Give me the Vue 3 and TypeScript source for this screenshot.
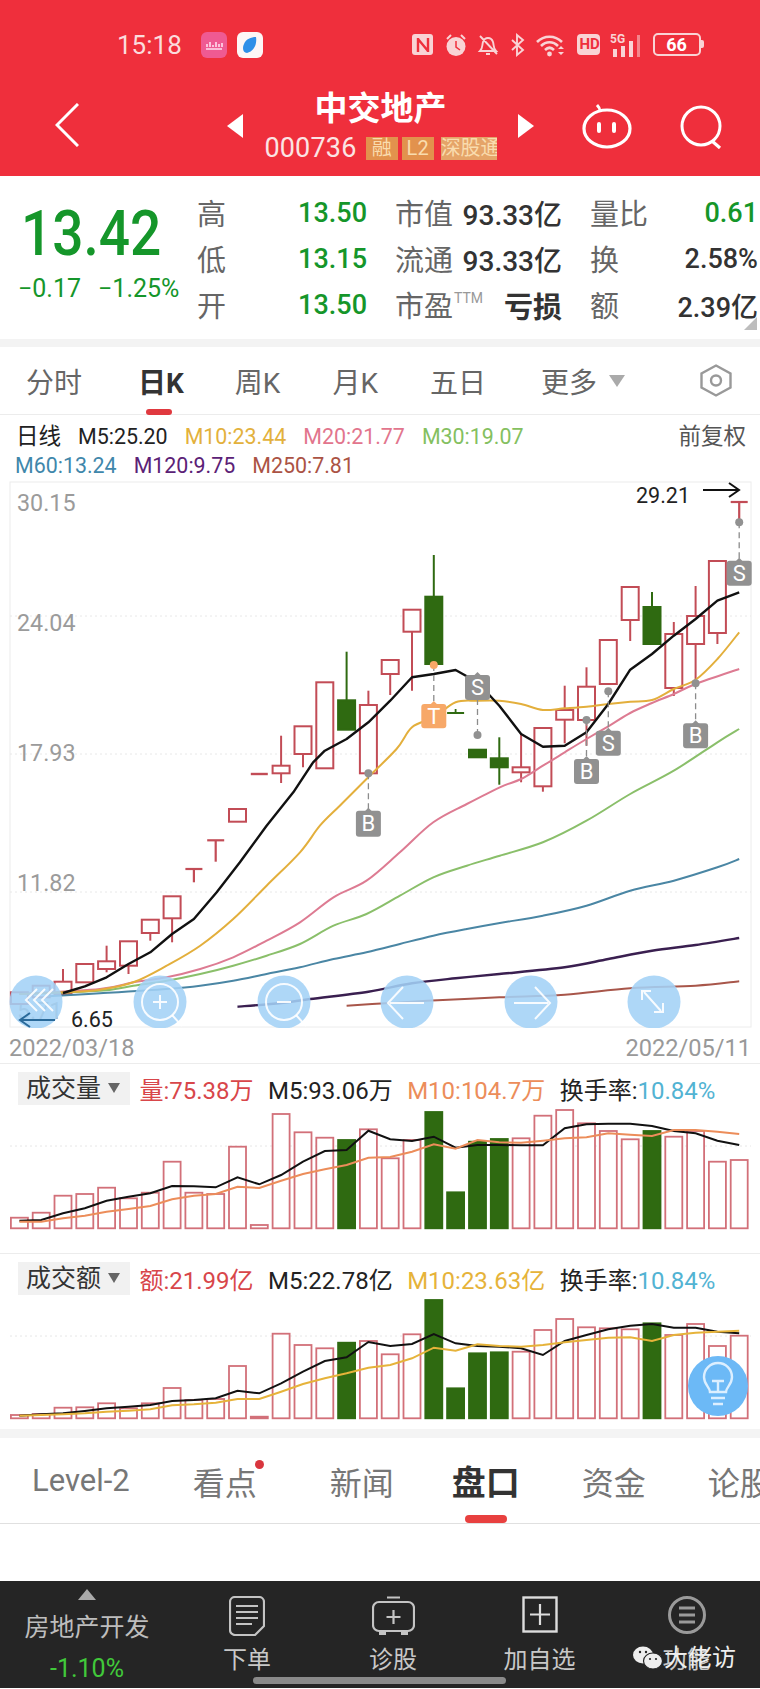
<script setup lang="ts">
type P = [number, number]
const X = (z: number) => +(z / 2.063).toFixed(1)
const Y = (z: number) => +(640 + z / 3).toFixed(1)
const Z4 = (z: number) => +(1050 + z / 3).toFixed(1)
const CX = (i: number) => X(40 + 45 * i)
const poly = (pts: P[], fy: (z: number) => number) => pts.map(([x, y]) => `${X(x)},${fy(y)}`).join(' ')
const straight = (pts: P[]) => pts.map(([x, y], i) => `${i ? 'L' : 'M'}${X(x)} ${Y(y)}`).join('')
const smooth = (pts: P[]) => {
  const p = pts.map(([x, y]) => [X(x), Y(y)])
  let d = `M${p[0][0]} ${p[0][1]}`
  for (let i = 0; i < p.length - 1; i++) {
    const a = p[Math.max(0, i - 1)]
    const b = p[i]
    const c = p[i + 1]
    const e = p[Math.min(p.length - 1, i + 2)]
    const c1 = [b[0] + (c[0] - a[0]) / 6, b[1] + (c[1] - a[1]) / 6]
    const c2 = [c[0] - (e[0] - b[0]) / 6, c[1] - (e[1] - b[1]) / 6]
    d += `C${c1[0].toFixed(1)} ${c1[1].toFixed(1)} ${c2[0].toFixed(1)} ${c2[1].toFixed(1)} ${c[0]} ${c[1]}`
  }
  return d
}

interface Candle { i: number; t: number; b: number; hi?: number; lo?: number; g?: boolean }
const candles: Candle[] = [
  { i: 0, t: 1060, b: 1095 }, { i: 1, t: 1040, b: 1075 }, { i: 2, t: 1028, b: 1065, hi: 990 },
  { i: 3, t: 975, b: 1030 }, { i: 4, t: 967, b: 990, hi: 920, lo: 1000 }, { i: 5, t: 907, b: 980, lo: 1005 },
  { i: 6, t: 842, b: 882, lo: 905 }, { i: 7, t: 772, b: 838, lo: 910 }, { i: 10, t: 510, b: 548 },
  { i: 12, t: 380, b: 403, hi: 290, lo: 432 }, { i: 13, t: 262, b: 345, lo: 385 }, { i: 14, t: 130, b: 388 },
  { i: 15, t: 184, b: 272, hi: 38, g: true }, { i: 16, t: 198, b: 403, hi: 155 }, { i: 17, t: 63, b: 105, lo: 168 },
  { i: 18, t: -88, b: -22, lo: 155 }, { i: 19, t: -127, b: 75, hi: -252, g: true }, { i: 21, t: 332, b: 355, g: true },
  { i: 22, t: 358, b: 385, hi: 295, lo: 437, g: true }, { i: 23, t: 385, b: 400, hi: 285, lo: 430 },
  { i: 24, t: 267, b: 442, lo: 458 }, { i: 25, t: 213, b: 242, hi: 140, lo: 313 }, { i: 26, t: 143, b: 243, hi: 85, lo: 320 },
  { i: 27, t: 3, b: 135 }, { i: 28, t: -156, b: -57, lo: 6 }, { i: 29, t: -96, b: 15, hi: -141, g: true },
  { i: 30, t: -15, b: 147, hi: -51, lo: 171 }, { i: 31, t: -69, b: 15, hi: -159, lo: 135 }, { i: 32, t: -234, b: -18, lo: 15 },
]
const tees = [
  { i: 8, y: 690, lo: 730 }, { i: 9, y: 604, lo: 668 }, { i: 33, y: -411, lo: -350 },
]
const dashes = [{ i: 11, y: 405 }]

const priceLines = [
  { c: '#4a86a4', w: 2, p: [[100, 1072], [206, 1063], [344, 1050], [413, 1040], [481, 1025], [550, 1005], [619, 985], [688, 960], [756, 940], [825, 915], [894, 890], [963, 870], [1031, 852], [1120, 830], [1210, 800], [1300, 755], [1390, 725], [1480, 685], [1525, 660]] as P[] },
  { c: '#8abf6a', w: 2, p: [[40, 1065], [206, 1055], [275, 1040], [344, 1025], [413, 1005], [481, 980], [550, 950], [619, 915], [688, 860], [756, 825], [825, 770], [894, 715], [963, 680], [1031, 650], [1120, 610], [1210, 545], [1300, 465], [1390, 395], [1480, 310], [1525, 270]] as P[] },
  { c: '#dd7b92', w: 2, p: [[40, 1065], [206, 1050], [275, 1030], [344, 1015], [413, 990], [481, 955], [550, 905], [619, 850], [688, 775], [756, 725], [825, 640], [894, 550], [963, 495], [1031, 445], [1075, 420], [1120, 380], [1165, 340], [1210, 300], [1255, 262], [1300, 222], [1345, 192], [1390, 165], [1435, 135], [1525, 90]] as P[] },
  { c: '#e3af3c', w: 2, p: [[40, 1065], [130, 1060], [206, 1052], [275, 1030], [344, 980], [413, 920], [481, 840], [550, 740], [619, 640], [660, 560], [701, 500], [756, 420], [818, 330], [850, 265], [895, 235], [940, 190], [985, 185], [1030, 185], [1075, 195], [1120, 213], [1165, 208], [1210, 203], [1255, 195], [1300, 188], [1345, 183], [1390, 150], [1435, 122], [1480, 60], [1525, -20]] as P[] },
  { c: '#3a1f50', w: 2.4, p: [[490, 1103], [580, 1092], [640, 1080], [760, 1058], [850, 1033], [940, 1018], [1030, 1005], [1165, 985], [1255, 960], [1345, 935], [1435, 918], [1525, 897]] as P[] },
  { c: '#a8564a', w: 2, p: [[715, 1100], [805, 1092], [880, 1085], [1030, 1075], [1165, 1067], [1300, 1048], [1435, 1040], [1525, 1027]] as P[] },
]
const blackLine: P[] = [[130, 1062], [175, 1042], [220, 1015], [265, 975], [310, 940], [355, 885], [400, 840], [447, 760], [495, 670], [550, 560], [605, 460], [646, 370], [670, 335], [715, 300], [760, 250], [805, 185], [850, 115], [895, 105], [940, 93], [985, 130], [1030, 200], [1075, 285], [1120, 323], [1165, 320], [1210, 280], [1255, 195], [1300, 92], [1345, 45], [1390, -10], [1435, -60], [1480, -115], [1525, -140]]

const markers = [
  { l: 'B', z: 760, dot: 403, top: 515, bot: 593, c: '#919191', above: false },
  { l: 'T', z: 895, dot: 78, top: 195, bot: 268, c: '#f7a868', above: false },
  { l: 'S', z: 985, dot: 288, top: 108, bot: 183, c: '#919191', above: true },
  { l: 'B', z: 1210, dot: 243, top: 360, bot: 435, c: '#919191', above: false },
  { l: 'S', z: 1255, dot: 157, top: 275, bot: 350, c: '#919191', above: false },
  { l: 'B', z: 1435, dot: 133, top: 253, bot: 328, c: '#919191', above: false },
  { l: 'S', z: 1525, dot: -350, top: -235, bot: -160, c: '#919191', above: false },
]
const markerBox = (m: { z: number; top: number; bot: number }) => ({
  x: X(m.z) - 12.5, y: Y(m.top), h: Y(m.bot) - Y(m.top),
})

const grids = [617, 755, 893]
const yLabels = [{ t: '30.15', y: 512 }, { t: '24.04', y: 632 }, { t: '17.93', y: 762 }, { t: '11.82', y: 892 }, { t: '5.71', y: 1020 }]
const buttons = [36, 160, 284, 407, 531, 654]

const volTops = [503, 488, 437, 432, 413, 445, 428, 335, 428, 432, 290, 525, 192, 247, 263, 270, 238, 325, 270, 186, 427, 275, 267, 265, 197, 180, 220, 243, 268, 243, 260, 243, 335, 330]
const amtTops = [1095, 1092, 1073, 1072, 1060, 1075, 1060, 1014, 1050, 1047, 948, 1100, 851, 885, 895, 878, 873, 913, 853, 750, 1015, 910, 907, 905, 840, 807, 832, 835, 838, 820, 855, 822, 888, 857]
const greens = new Set([15, 19, 20, 21, 22, 29])
const series = (ys: number[]): P[] => ys.map((y, i) => [40 + 45 * i, y] as P)
const volBlack = poly(series([512, 510, 490, 475, 452, 440, 430, 408, 409, 412, 382, 403, 375, 335, 303, 300, 242, 268, 273, 260, 293, 285, 285, 286, 286, 235, 223, 221, 221, 228, 243, 250, 272, 285]), Z4)
const volOrange = poly(series([515, 515, 505, 497, 485, 477, 468, 448, 437, 432, 410, 414, 392, 372, 358, 345, 323, 321, 305, 283, 296, 270, 277, 278, 272, 265, 262, 250, 254, 258, 240, 240, 245, 252]), Z4)
const amtBlack = poly(series([1097, 1093, 1090, 1083, 1075, 1070, 1065, 1053, 1050, 1045, 1022, 1030, 1000, 965, 933, 922, 876, 888, 882, 852, 880, 888, 890, 895, 915, 873, 855, 838, 827, 822, 833, 833, 845, 850]), Z4)
const amtGold = poly(series([1097, 1095, 1093, 1090, 1085, 1082, 1078, 1066, 1063, 1058, 1047, 1047, 1025, 1002, 985, 970, 953, 945, 925, 893, 902, 883, 888, 890, 885, 877, 870, 863, 862, 873, 855, 848, 845, 842]), Z4)

const stats = [
  ['高', '13.50', '市值', '93.33亿', '量比', '0.61'],
  ['低', '13.15', '流通', '93.33亿', '换', '2.58%'],
  ['开', '13.50', '市盈', '亏损', '额', '2.39亿'],
]
const tabs = ['分时', '日K', '周K', '月K', '五日', '更多']
const lowerTabs = ['Level-2', '看点', '新闻', '盘口', '资金', '论股']
</script>

<template>
  <div class="page">
    <header class="head">
      <div class="status">
        <span class="time">15:18</span>
        <svg class="app" width="26" height="26" viewBox="0 0 26 26">
          <rect width="26" height="26" rx="6" fill="#ef5a92" />
          <path d="M6 15v-3M9 15v-5M12 15v-2M15 15v-5M18 15v-3M21 15v-4M5 17h16" stroke="#fde" stroke-width="1.6" fill="none" />
        </svg>
        <svg class="app" width="26" height="26" viewBox="0 0 26 26">
          <rect width="26" height="26" rx="6" fill="#fdf6f6" />
          <path d="M19 5c1 6-1 14-9 16-4 0-5-5-3-9 2-5 7-7 12-7z" fill="#2f8fe8" />
        </svg>
        <div class="sys">
          <svg width="22" height="22" viewBox="0 0 22 22"><rect width="21" height="21" rx="3" fill="#f9d3d5" /><path d="M6 4v14M16 4v14M6 5l10 12" stroke="#ef2f3c" stroke-width="2.400" fill="none" /></svg>
          <svg width="22" height="24" viewBox="0 0 22 24"><circle cx="11" cy="13.500" r="9.500" fill="#f9d3d5" /><path d="M11 8v6l4 3" stroke="#ef2f3c" stroke-width="1.500" fill="none" /><path d="M2 6l4-4M20 6l-4-4" stroke="#f9d3d5" stroke-width="2" /></svg>
          <svg width="22" height="24" viewBox="0 0 22 24"><path d="M3 18c3-3 2-6 3-9 1-3 3-4 5-4s4 1 5 4c1 3 0 6 3 9zM9 21h4M3 3l17 18" stroke="#f9d3d5" stroke-width="1.900" fill="none" /></svg>
          <svg width="15" height="24" viewBox="0 0 15 24"><path d="M2 7l11 10-6 5V2l6 5L2 17" stroke="#f9d3d5" stroke-width="1.900" fill="none" /></svg>
          <svg width="31" height="24" viewBox="0 0 31 24"><path d="M2 9c7-7 18-7 25 0M6 13c5-5 12-5 17 0M10 17c3-3 6-3 9 0" stroke="#f9d3d5" stroke-width="2.600" fill="none" /><circle cx="14.500" cy="21" r="2.400" fill="#f9d3d5" /><path d="M23 16l3-3 3 3zM23 19l3 3 3-3z" fill="#f9d3d5" /></svg>
          <span class="hd">HD</span>
          <svg width="32" height="24" viewBox="0 0 32 24"><rect x="3" y="16" width="4" height="8" fill="#f9d3d5" /><rect x="11" y="13" width="4" height="11" fill="#f9d3d5" /><rect x="19" y="8" width="4" height="16" fill="#f9d3d5" /><rect x="27" y="2" width="3" height="22" fill="#f4868c" /><text x="0" y="10" class="five">5G</text></svg>
          <div class="batt"><span class="battnum">66</span></div>
        </div>
      </div>
      <div class="nav">
        <svg class="back" width="24" height="44" viewBox="0 0 24 44"><path d="M23 1L2 22l21 21" stroke="#fff" stroke-width="3" fill="none" /></svg>
        <span class="tri-l"></span>
        <div class="name">
          <div class="title">中交地产</div>
          <div class="code-row">
            <span class="code">000736</span>
            <span class="tag t1">融</span>
            <span class="tag t1">L2</span>
            <span class="tag t3">深股通</span>
          </div>
        </div>
        <span class="tri-r"></span>
        <svg class="robot" width="50" height="46" viewBox="0 0 50 46"><ellipse cx="25" cy="25.500" rx="23" ry="18.500" stroke="#fff" stroke-width="3.200" fill="none" /><path d="M18 8c0-3-2-5-3-6" stroke="#fff" stroke-width="3" fill="none" /><rect x="15" y="19" width="4" height="11" rx="2" fill="#fff" /><rect x="30" y="19" width="4" height="11" rx="2" fill="#fff" /></svg>
        <svg class="search" width="44" height="44" viewBox="0 0 44 44"><circle cx="21" cy="21" r="19" stroke="#fff" stroke-width="3" fill="none" /><path d="M32 36l8 7" stroke="#fff" stroke-width="3.200" /></svg>
      </div>
    </header>

    <section class="stats">
      <div class="price">
        <div class="big">13.42</div>
        <div class="chg"><span>−0.17</span><span>−1.25%</span></div>
      </div>
      <div class="grid">
        <template v-for="(r, ri) in stats" :key="ri">
          <span class="lab">{{ r[0] }}</span>
          <span class="val up">{{ r[1] }}</span>
          <span class="lab lab2">{{ r[2] }}<sup v-if="ri === 2">TTM</sup></span>
          <span class="val dark wide" :class="{ loss: ri === 2 }">{{ r[3] }}</span>
          <span class="lab lab3">{{ r[4] }}</span>
          <span class="val" :class="ri === 0 ? 'up' : 'dark'">{{ r[5] }}</span>
        </template>
      </div>
      <span class="corner"></span>
    </section>
    <div class="band"></div>

    <nav class="tabs">
      <span v-for="(t, i) in tabs" :key="t" class="tab" :class="{ on: i === 1 }">{{ t }}</span>
      <span class="more-tri"></span>
      <svg class="hex" width="34" height="33" viewBox="0 0 34 33"><path d="M17 1.500l14.500 8v14l-14.500 8-14.500-8v-14z" stroke="#999" stroke-width="2.400" fill="none" /><circle cx="17" cy="16.500" r="5" stroke="#999" stroke-width="2.400" fill="none" /></svg>
      <i class="bar"></i>
    </nav>

    <div class="legend">
      <div class="row one">
        <span class="k cn">日线</span>
        <span class="k">M5:25.20</span>
        <span class="m10">M10:23.44</span>
        <span class="m20">M20:21.77</span>
        <span class="m30">M30:19.07</span>
        <span class="adj cn">前复权</span>
      </div>
      <div class="row two">
        <span class="m60">M60:13.24</span>
        <span class="m120">M120:9.75</span>
        <span class="m250">M250:7.81</span>
      </div>
    </div>

    <svg class="chart" width="760" height="547" viewBox="0 482 760 547">
      <rect x="10" y="483" width="741" height="545" fill="#fff" stroke="#ececec" />
      <line v-for="g in grids" :key="g" x1="10" x2="751" :y1="g" :y2="g" stroke="#e8e8e8" stroke-dasharray="2 3" />
      <text v-for="l in yLabels" :key="l.t" x="17" :y="l.y" class="ylab">{{ l.t }}</text>

      <g v-for="c in candles" :key="c.i" :stroke="c.g ? '#2f6a11' : '#c24c56'">
        <line v-if="c.hi !== undefined" :x1="CX(c.i)" :x2="CX(c.i)" :y1="Y(c.hi)" :y2="Y(c.t)" stroke-width="2" />
        <line v-if="c.lo !== undefined" :x1="CX(c.i)" :x2="CX(c.i)" :y1="Y(c.b)" :y2="Y(c.lo)" stroke-width="2" />
        <rect :x="CX(c.i) - 8.500" :y="Y(c.t)" width="17" :height="Y(c.b) - Y(c.t)" :fill="c.g ? '#2f6a11' : '#fff'" stroke-width="2" />
      </g>
      <g stroke="#c24c56" stroke-width="2.200">
        <template v-for="t in tees" :key="t.i">
          <line :x1="CX(t.i) - 8.500" :x2="CX(t.i) + 8.500" :y1="Y(t.y)" :y2="Y(t.y)" />
          <line :x1="CX(t.i)" :x2="CX(t.i)" :y1="Y(t.y)" :y2="Y(t.lo)" />
        </template>
      </g>
      <line v-for="d in dashes" :key="d.i" :x1="CX(d.i) - 8.500" :x2="CX(d.i) + 8.500" :y1="Y(d.y)" :y2="Y(d.y)" stroke="#c24c56" stroke-width="2.400" />
      <path :d="`M${CX(20) - 8.500} ${Y(222)}H${CX(20) + 8.500}M${CX(20)} ${Y(210)}V${Y(222)}`" stroke="#2f6a11" stroke-width="1.800" />

      <path v-for="l in priceLines" :key="l.c" :d="smooth(l.p)" fill="none" :stroke="l.c" :stroke-width="l.w" stroke-linejoin="round" />
      <path :d="straight(blackLine)" fill="none" stroke="#111" stroke-width="2.400" stroke-linejoin="round" />

      <g v-for="m in markers" :key="m.z" :fill="m.c">
        <line :x1="X(m.z)" :x2="X(m.z)" :y1="Y(m.dot)" :y2="Y(m.above ? m.bot : m.top)" stroke="#8c8c8c" stroke-width="1.300" stroke-dasharray="6 4" />
        <circle :cx="X(m.z)" :cy="Y(m.dot)" r="4" />
        <rect :x="markerBox(m).x" :y="markerBox(m).y" width="25" :height="markerBox(m).h" rx="3" />
        <path :d="`M${X(m.z) - 4} ${Y(m.top) + 1}L${X(m.z)} ${Y(m.top) - 3}L${X(m.z) + 4} ${Y(m.top) + 1}z`" />
        <text :x="X(m.z)" :y="(Y(m.top) + Y(m.bot)) / 2 + 7.500" class="mark" text-anchor="middle">{{ m.l }}</text>
      </g>

      <text x="636" y="504" class="note">29.21</text>
      <path d="M703 491h36M729 484l10 7-10 7" stroke="#111" stroke-width="2" fill="none" />

      <g fill="#a3d2f6" fill-opacity="0.88">
        <circle v-for="b in buttons" :key="b" :cx="b" cy="1003" r="26.500" />
      </g>
      <text x="71" y="1028" class="note">6.65</text>
      <path d="M55 1021H20M30 1014l-10 7 10 7" stroke="#2a6a9a" stroke-width="2" fill="none" />
      <g stroke="#fff" stroke-opacity="0.9" stroke-width="2" fill="none">
        <path d="M37 990l-11 11 11 11M45 990l-11 11 11 11M53 990l-11 11 11 11" />
        <circle cx="160" cy="1003" r="18" /><path d="M172 1016l10 11M153 1003h14M160 996v14" />
        <circle cx="284" cy="1003" r="18" /><path d="M296 1016l10 11M277 1003h14" />
        <path d="M424 1004h-34M403 988l-15 16 15 16" />
        <path d="M514 1004h34M535 988l15 16-15 16" />
        <path d="M644 993l17 19M642 1001v-9h9M663 1004v9h-9" />
      </g>
    </svg>

    <div class="dates"><span>2022/03/18</span><span>2022/05/11</span></div>

    <section class="panel vol">
      <div class="phead">
        <span class="ptag">成交量<i></i></span>
        <span class="red">量:75.38万</span>
        <span class="k">M5:93.06万</span>
        <span class="orange">M10:104.7万</span>
        <span class="k">换手率:<em>10.84%</em></span>
      </div>
      <svg width="760" height="125" viewBox="0 1105 760 125" class="mini">
        <line x1="10" x2="751" y1="1146" y2="1146" stroke="#e6e6e6" stroke-dasharray="2 3" />
        <rect v-for="(t, i) in volTops" :key="i" :x="CX(i) - 8.500" :y="Z4(t)" width="17" :height="Z4(535) - Z4(t)" :fill="greens.has(i) ? '#2f6a11' : '#fff'" :stroke="greens.has(i) ? '#2f6a11' : '#d27079'" stroke-width="1.800" />
        <polyline :points="volBlack" fill="none" stroke="#111" stroke-width="2" />
        <polyline :points="volOrange" fill="none" stroke="#ec8d5a" stroke-width="2" />
      </svg>
    </section>

    <section class="panel amt">
      <div class="phead">
        <span class="ptag">成交额<i></i></span>
        <span class="red">额:21.99亿</span>
        <span class="k">M5:22.78亿</span>
        <span class="gold">M10:23.63亿</span>
        <span class="k">换手率:<em>10.84%</em></span>
      </div>
      <svg width="760" height="125" viewBox="0 1295 760 125" class="mini">
        <line x1="10" x2="751" y1="1336" y2="1336" stroke="#e6e6e6" stroke-dasharray="2 3" />
        <rect v-for="(t, i) in amtTops" :key="i" :x="CX(i) - 8.500" :y="Z4(t)" width="17" :height="Z4(1105) - Z4(t)" :fill="greens.has(i) ? '#2f6a11' : '#fff'" :stroke="greens.has(i) ? '#2f6a11' : '#d27079'" stroke-width="1.800" />
        <polyline :points="amtBlack" fill="none" stroke="#111" stroke-width="2" />
        <polyline :points="amtGold" fill="none" stroke="#e6b33a" stroke-width="2" />
        <circle cx="718" cy="1386" r="30" fill="#6cb9f6" />
        <path d="M710 1392c0-5-6-7-6-15a14 14 0 0 1 28 0c0 8-6 10-6 15zM711 1398h14M713 1404h10M718 1381v11M712 1381h12" stroke="#dcefff" stroke-width="2.400" fill="none" />
      </svg>
    </section>
    <div class="band bottomband"></div>

    <nav class="ltabs">
      <span v-for="(t, i) in lowerTabs" :key="t" class="ltab" :class="{ on: i === 3, dot: i === 1 }">{{ t }}</span>
      <i class="lbar"></i>
    </nav>
    <div class="blank"></div>

    <footer class="foot">
      <div class="cell first">
        <span class="up-tri"></span>
        <span class="sector">房地产开发</span>
        <span class="pct">-1.10%</span>
      </div>
      <div class="cell">
        <svg width="36" height="40" viewBox="0 0 36 40"><path d="M6 1h24a5 5 0 0 1 5 5v24l-9 9H6a5 5 0 0 1-5-5V6a5 5 0 0 1 5-5z" stroke="#c4c4c4" stroke-width="2.200" fill="none" /><path d="M7 10h22M7 16h22M7 22h22M7 28h16" stroke="#c4c4c4" stroke-width="2.200" /></svg>
        <span class="fl">下单</span>
      </div>
      <div class="cell">
        <svg width="43" height="40" viewBox="0 0 43 40"><rect x="1" y="6" width="41" height="29" rx="6" stroke="#c4c4c4" stroke-width="2.200" fill="none" /><path d="M15 1.500h13M21.500 14v14M14.500 21h14" stroke="#c4c4c4" stroke-width="2.200" /><path d="M7 35h7v4H7zM29 35h7v4h-7z" fill="#c4c4c4" /></svg>
        <span class="fl">诊股</span>
      </div>
      <div class="cell">
        <svg width="36" height="40" viewBox="0 0 36 40"><rect x="1.500" y="1.500" width="33" height="34" stroke="#ddd" stroke-width="2.400" fill="none" /><path d="M18 8v21M8 18.500h20" stroke="#ddd" stroke-width="2.200" /></svg>
        <span class="fl">加自选</span>
      </div>
      <div class="cell">
        <svg width="38" height="40" viewBox="0 0 38 40"><circle cx="19" cy="19" r="17.500" stroke="#9a9a9a" stroke-width="3" fill="none" /><path d="M11 12h16M11 19h16M11 26h16" stroke="#9a9a9a" stroke-width="3" /></svg>
        <span class="fl">功能</span>
      </div>
      <div class="mark-wm">
        <svg width="32" height="26" viewBox="0 0 32 26"><ellipse cx="11" cy="10" rx="10" ry="8.500" fill="#eee" /><ellipse cx="21" cy="16" rx="9.500" ry="8" fill="#eee" stroke="#252525" stroke-width="1.200" /><circle cx="8" cy="7" r="1.200" fill="#252525" /><circle cx="14" cy="7" r="1.200" fill="#252525" /><circle cx="18" cy="14" r="1.100" fill="#252525" /><circle cx="24" cy="14" r="1.100" fill="#252525" /></svg>
        <span>大佬访</span>
      </div>
      <i class="home"></i>
    </footer>
  </div>
</template>

<style>
html, body { margin: 0; padding: 0; background: #fff; }
</style>

<style scoped>
.page {
  position: relative;
  width: 760px;
  height: 1689px;
  overflow: hidden;
  background: #fff;
  font-family: Roboto, "Noto Sans CJK SC", "Liberation Sans", sans-serif;
  color: #333;
}
.head { height: 176px; background: #ef2f3c; color: #fff; }
.status { display: flex; align-items: center; height: 76px; padding: 13px 0 0 117px; box-sizing: border-box; }
.time { font-size: 26px; width: 84px; color: #fbdcdc; }
.app { margin-right: 10px; }
.sys { display: flex; align-items: center; margin-left: 139px; gap: 10.500px; }
.hd { background: #f9d3d5; color: #ef2f3c; font-size: 15px; font-weight: 700; border-radius: 4px; padding: 2px 3px; width: 17px; text-align: center; line-height: 17px; }
.five { font-size: 12px; fill: #f9d3d5; font-weight: 700; }
.batt { position: relative; width: 44px; height: 19px; border: 2px solid #f9d3d5; border-radius: 5px; text-align: center; line-height: 19px; }
.batt::after { content: ""; position: absolute; right: -5px; top: 5px; width: 3px; height: 8px; background: #f9d3d5; border-radius: 0 2px 2px 0; }
.battnum { font-size: 18px; color: #fff; font-weight: 700; }

.nav { display: flex; align-items: flex-start; height: 100px; padding-left: 55px; }
.back { margin-top: 27px; flex: none; }
.tri-l, .tri-r { flex: none; width: 0; height: 0; margin-top: 38px; border-top: 12px solid transparent; border-bottom: 12px solid transparent; }
.tri-l { margin-left: 148px; border-right: 16px solid #fff; }
.tri-r { border-left: 16px solid #fff; }
.name { flex: none; width: 275px; text-align: center; }
.title { font-size: 33px; font-weight: 700; line-height: 40px; margin-top: 13px; }
.code-row { display: flex; justify-content: center; align-items: center; margin-top: 7px; height: 24px; }
.code { font-size: 27px; letter-spacing: 0.2px; margin-right: 9px; color: #fbe4e4; }
.tag { background: #e2924d; color: #f9dcae; font-size: 20px; height: 23px; line-height: 23px; text-align: center; margin-right: 4px; overflow: hidden; white-space: nowrap; }
.t1 { width: 32px; }
.t3 { width: 56px; margin-right: 0; margin-left: 3px; background: #e5a468; text-align: left; }
.robot { margin-left: 48px; margin-top: 27px; flex: none; }
.search { margin-left: 48px; margin-top: 29px; flex: none; }

.stats { position: relative; height: 163px; display: flex; }
.price { width: 197px; flex: none; }
.big { font-size: 55px; font-weight: 500; color: #15962a; line-height: 60px; padding: 27px 0 0 21px; transform: scaleY(1.14); transform-origin: 0 60%; }
.chg { display: flex; gap: 17px; padding-left: 18px; margin-top: 11px; font-size: 25px; color: #15962a; line-height: 30px; white-space: nowrap; }
.grid { display: grid; grid-template-columns: 63px 107px 94px 101px 88px 108px; grid-auto-rows: 46px; padding-top: 13px; align-items: center; }
.lab { font-size: 29px; color: #666; white-space: nowrap; }
.lab2, .lab3 { padding-left: 28px; }
.lab2 sup { font-size: 14px; color: #999; vertical-align: 14px; line-height: 0; margin-left: 1px; }
.val { font-size: 27px; text-align: right; font-weight: 500; white-space: nowrap; padding-top: 2px; }
.wide { font-size: 28px; }
.loss { font-size: 29px; font-weight: 700; }
.up { color: #15962a; }
.dark { color: #333; }
.corner { position: absolute; right: 3px; bottom: 9px; width: 0; height: 0; border-left: 13px solid transparent; border-bottom: 13px solid #bdbdbd; }
.band { height: 8px; background: #f3f3f3; }

.tabs { position: relative; height: 67px; display: flex; align-items: center; padding-left: 26px; border-bottom: 1px solid #ececec; font-size: 28px; color: #666; }
.tab:nth-child(2) { margin-left: 56px; }
.tab:nth-child(3) { margin-left: 51px; }
.tab:nth-child(4) { margin-left: 52px; }
.tab:nth-child(5) { margin-left: 52px; }
.tab:nth-child(6) { margin-left: 55px; }
.tab.on { color: #333; font-weight: 700; }
.more-tri { margin-left: 12px; width: 0; height: 0; border-left: 8px solid transparent; border-right: 8px solid transparent; border-top: 12px solid #aaa; }
.hex { margin-left: 74px; }
.bar { position: absolute; left: 146px; bottom: -1px; width: 26px; height: 6px; border-radius: 3px; background: #e0393f; }

.legend { height: 66px; font-size: 21.400px; padding-top: 7px; box-sizing: border-box; }
.row { display: flex; gap: 17px; line-height: 29px; height: 29px; white-space: nowrap; }
.one { padding: 0 14px 0 16px; }
.two { padding-left: 15px; gap: 17px; }
.cn { font-size: 22.500px; }
.k { color: #222; }
.m10 { color: #e3b13c; }
.m20 { color: #e2758d; }
.m30 { color: #84c060; }
.m60 { color: #3f87ab; }
.m120 { color: #5b2176; }
.m250 { color: #ab5344; }
.adj { margin-left: auto; color: #555; }

.chart { display: block; }
.ylab { font-size: 23.300px; fill: #9b9b9b; font-family: Roboto, sans-serif; }
.note { font-size: 21.500px; fill: #222; font-family: Roboto, sans-serif; }
.mark { font-size: 22px; fill: #fff; font-family: Roboto, sans-serif; }

.dates { height: 35px; display: flex; justify-content: space-between; padding: 0 9px 0 9px; font-size: 23.600px; line-height: 40px; color: #999; }

.panel { border-top: 1px solid #ececec; box-sizing: border-box; }
.vol { height: 190px; padding-top: 8px; }
.amt { height: 176px; padding-top: 8px; }
.phead { display: flex; align-items: center; height: 33px; font-size: 24px; gap: 14.500px; padding-left: 18px; white-space: nowrap; }
.ptag { position: relative; width: 112px; height: 33px; line-height: 33px; box-sizing: border-box; padding-left: 8px; background: #f1f1f1; margin-right: -5px; font-size: 25px; color: #333; }
.ptag i { position: absolute; right: 10px; top: 11px; width: 0; height: 0; border-left: 6px solid transparent; border-right: 6px solid transparent; border-top: 10px solid #666; }
.red { color: #d8464a; }
.orange { color: #ec8d5a; }
.gold { color: #e6b33a; }
.phead em { font-style: normal; color: #52b3d3; }
.mini { display: block; }
.bottomband { height: 9px; background: #f4f4f4; }

.ltabs { position: relative; height: 86px; display: flex; align-items: center; padding: 0 0 0 32px; border-bottom: 1px solid #e0e0e0; box-sizing: border-box; font-size: 32px; color: #777; white-space: nowrap; overflow: hidden; }
.ltab:nth-child(1) { font-size: 31px; }
.ltab:nth-child(2) { margin-left: 63px; position: relative; }
.ltab:nth-child(3) { margin-left: 73px; }
.ltab:nth-child(4) { margin-left: 58px; }
.ltab:nth-child(5) { margin-left: 62px; }
.ltab:nth-child(6) { margin-left: 62px; }
.ltab.on { color: #333; font-weight: 700; font-size: 34px; }
.ltab.dot::after { content: ""; position: absolute; right: -7px; top: 2px; width: 9px; height: 9px; border-radius: 50%; background: #d9363e; }
.lbar { position: absolute; left: 465px; bottom: 0; width: 42px; height: 8px; border-radius: 4px; background: #e8403f; }
.blank { height: 57px; }

.foot { position: relative; height: 107px; background: #252525; display: grid; grid-template-columns: 174px 146px 146px 147px 147px; color: #bbb; }
.cell { display: flex; flex-direction: column; align-items: center; padding-top: 15px; }
.fl { font-size: 24px; line-height: 30px; margin-top: 9px; color: #c8c8c8; }
.first { padding-top: 8px; }
.up-tri { width: 0; height: 0; border-left: 9px solid transparent; border-right: 9px solid transparent; border-bottom: 11px solid #aaa; }
.sector { font-size: 25px; line-height: 30px; margin-top: 13px; color: #bdbdbd; }
.pct { font-size: 25px; line-height: 30px; margin-top: 11px; color: #41c93a; }
.mark-wm { position: absolute; left: 632px; top: 62px; display: flex; align-items: center; gap: 0; color: #eee; font-size: 24px; line-height: 30px; }
.home { position: absolute; left: 253px; bottom: 4px; width: 253px; height: 7px; border-radius: 4px; background: #8a8a8a; }
</style>
